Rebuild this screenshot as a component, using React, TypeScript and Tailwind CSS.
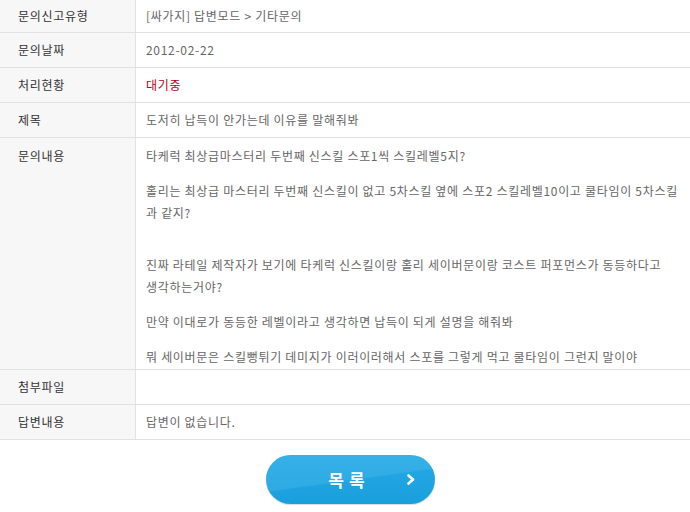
import React from "react";

const font = { fontFamily: '"Noto Sans CJK KR", "Noto Sans", sans-serif' };

function Row({ label, children, h = "h-[34px]" }: { label: string; children?: React.ReactNode; h?: string }) {
  return (
    <div className={`flex border-b border-[#e1e1e1] ${h}`}>
      <div className="w-[136px] shrink-0 bg-[#f7f7f7] border-r border-[#e3e3e3] pl-[18px] flex items-center text-[12px] tracking-[0.7px] text-[#333]">
        {label}
      </div>
      <div className="flex-1 pl-[10px] flex items-center text-[12px] tracking-[0.7px] text-[#666]">{children}</div>
    </div>
  );
}

export default function App() {
  return (
    <div className="w-[690px] h-[512px] bg-white overflow-hidden" style={font}>
      <div className="flex flex-col">
        <Row label="문의신고유형" h="h-[33px]">[싸가지] 답변모드 &gt; 기타문의</Row>
        <Row label="문의날짜" h="h-[35px]">2012-02-22</Row>
        <Row label="처리현황" h="h-[35px]">
          <span className="text-[#b3001b]">대기중</span>
        </Row>
        <Row label="제목" h="h-[35px]">도저히 납득이 안가는데 이유를 말해줘봐</Row>
        <div className="flex border-b border-[#e1e1e1] h-[232px]">
          <div className="w-[136px] shrink-0 bg-[#f7f7f7] border-r border-[#e3e3e3] pl-[18px] pt-[7px] text-[12px] tracking-[0.7px] text-[#333] leading-[22px]">
            문의내용
          </div>
          <div className="flex-1 pl-[10px] pt-[7px] text-[12px] tracking-[0.7px] text-[#666] leading-[22px] whitespace-nowrap">
            <p>타케럭 최상급마스터리 두번째 신스킬 스포1씩 스킬레벨5지?</p>
            <p className="mt-[13px]">
              홀리는 최상급 마스터리 두번째 신스킬이 없고 5차스킬 옆에 스포2 스킬레벨10이고 쿨타임이 5차스킬
              <br />과 같지?
            </p>
            <p className="mt-[30px]">
              진짜 라테일 제작자가 보기에 타케럭 신스킬이랑 홀리 세이버문이랑 코스트 퍼포먼스가 동등하다고
              <br />생각하는거야?
            </p>
            <p className="mt-[13px]">만약 이대로가 동등한 레벨이라고 생각하면 납득이 되게 설명을 해줘봐</p>
            <p className="mt-[13px]">뭐 세이버문은 스킬뻥튀기 데미지가 이러이러해서 스포를 그렇게 먹고 쿨타임이 그런지 말이야</p>
          </div>
        </div>
        <Row label="첨부파일" h="h-[35px]" />
        <Row label="답변내용" h="h-[35px]">답변이 없습니다.</Row>
      </div>
      <div className="flex justify-center pl-[11px] mt-[15px]">
        <button className="relative w-[169px] h-[49px] rounded-full overflow-hidden bg-gradient-to-b from-[#24aae6] to-[#1a9fdd] shadow-[0_1px_1px_rgba(0,0,0,0.15)] flex items-center justify-center">
          <span className="absolute inset-0 bg-[linear-gradient(172deg,rgba(255,255,255,0.08)_0%,rgba(255,255,255,0.08)_50%,rgba(255,255,255,0)_52%)]" />
          <span className="relative text-white text-[17px] font-bold tracking-[5px] pl-[5px] -ml-[8px]">목록</span>
          <svg className="absolute right-[20px] top-[19px]" width="8" height="11" viewBox="0 0 8 11">
            <path d="M1.5 1.5 L6 5.5 L1.5 9.5" fill="none" stroke="white" strokeWidth="2.6" strokeLinecap="round" strokeLinejoin="round" />
          </svg>
        </button>
      </div>
    </div>
  );
}
